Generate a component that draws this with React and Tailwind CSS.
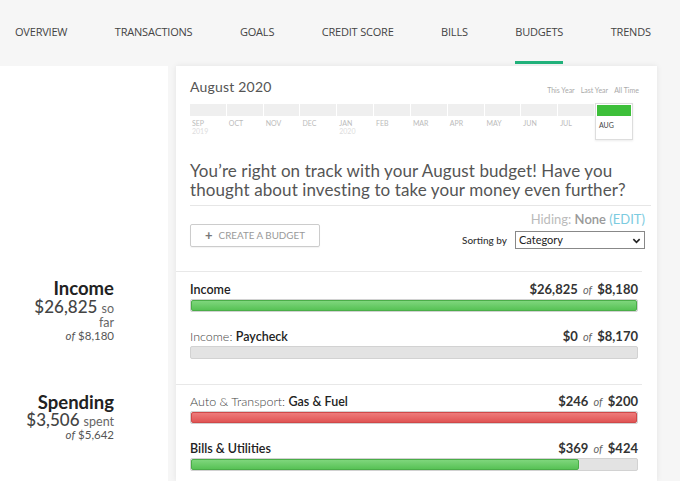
import React from 'react';

const navItems = ['OVERVIEW', 'TRANSACTIONS', 'GOALS', 'CREDIT SCORE', 'BILLS', 'BUDGETS', 'TRENDS'];

const months = [
  { m: 'SEP', y: '2019' },
  { m: 'OCT' },
  { m: 'NOV' },
  { m: 'DEC' },
  { m: 'JAN', y: '2020' },
  { m: 'FEB' },
  { m: 'MAR' },
  { m: 'APR' },
  { m: 'MAY' },
  { m: 'JUN' },
  { m: 'JUL' },
];

const Bar = ({ pct, color }) => {
  const fill =
    color === 'red'
      ? 'bg-gradient-to-b from-[#ee7b7b] to-[#e05454] border-[#d04848]'
      : 'bg-gradient-to-b from-[#7ed67c] to-[#57c255] border-[#4aad48]';
  return (
    <div className="mt-[2px] h-[13px] w-[448px] rounded-[2px] border border-[#d2d2d2] bg-[#e3e3e3] overflow-hidden flex">
      {pct > 0 && (
        <div className={`h-full rounded-[2px] border ${fill}`} style={{ width: `${pct}%` }} />
      )}
    </div>
  );
};

const BudgetRow = ({ prefix, name, spent, total, pct, color }) => (
  <div className="mb-[18px]">
    <div className="flex items-end justify-between w-[448px] h-[14px] text-[12.5px] leading-[14px] text-[#222]">
      <span>
        {prefix && <span className="font-light text-[#444]">{prefix}: </span>}
        <span className="font-semibold">{name}</span>
      </span>
      <span className="font-bold text-[13px] text-[#333]">
        {spent} <span className="italic font-normal text-[11px] text-[#666] px-[2px]">of</span> {total}
      </span>
    </div>
    <Bar pct={pct} color={color} />
  </div>
);

export default function App() {
  return (
    <div className="w-[680px] h-[481px] overflow-hidden bg-[#f6f6f6] font-['Lato',sans-serif]">
      {/* Top nav */}
      <div className="h-[66px] flex items-start pl-[15px] gap-[47.5px] font-['Open_Sans',sans-serif] text-[11px] text-[#444]">
        {navItems.map((item) => (
          <div key={item} className="flex flex-col items-stretch h-full">
            <span className="pt-[24px] leading-[15px] tracking-[-0.2px]">{item}</span>
            <div className="flex-1" />
            {item === 'BUDGETS' && <div className="h-[3px] mb-[2px] bg-[#22b37c]" />}
          </div>
        ))}
      </div>

      <div className="flex">
        {/* Left summary column */}
        <div className="w-[168px] h-[415px] bg-white pr-[54px] text-right text-[#333]">
          <div className="pt-[211px] text-[18.5px] leading-[22px] font-bold text-[#222]">Income</div>
          <div className="mt-[2px] leading-[12px] text-[#444]">
            <span className="text-[17px] font-medium">$26,825</span>{' '}
            <span className="text-[12.5px] text-[#666]">so<br />far</span>
          </div>
          <div className="text-[11.5px] leading-[13px] text-[#555]">
            <span className="italic">of</span> $8,180
          </div>

          <div className="mt-[49px] text-[18.5px] leading-[22px] font-bold text-[#222]">Spending</div>
          <div className="leading-[14px] text-[#444]">
            <span className="text-[17px] font-medium">$3,506</span>{' '}
            <span className="text-[12.5px] text-[#666]">spent</span>
          </div>
          <div className="text-[11.5px] leading-[12px] text-[#555]">
            <span className="italic">of</span> $5,642
          </div>
        </div>

        {/* Main card */}
        <div className="ml-[8px] w-[481px] h-[415px] bg-white shadow-[0_0_6px_rgba(0,0,0,0.08)] pl-[14px] pr-[12px]">
          <div className="flex justify-between items-end pt-[12px] pr-[6px]">
            <span className="text-[14px] leading-[18px] text-[#555] tracking-[0.2px]">August 2020</span>
            <span className="text-[7px] leading-[10px] text-[#aaa] space-x-[6px] mb-[1px]">
              <span>This Year</span>
              <span>Last Year</span>
              <span>All Time</span>
            </span>
          </div>

          {/* Month strip */}
          <div className="mt-[7px] flex w-[443px]">
            {months.map((mo) => (
              <div key={mo.m} className="w-[36.8px] mr-[1px] pt-[1px]">
                <div className="h-[12px] bg-[#efefef]" />
                <div className="pt-[3px] pl-[2px] text-[7px] leading-[8px] text-[#bbb]">
                  <div>{mo.m}</div>
                  {mo.y && <div className="text-[#ddd]">{mo.y}</div>}
                </div>
              </div>
            ))}
            <div className="w-[39px] h-[37px] border border-[#ddd] shadow-[0_1px_2px_rgba(0,0,0,0.08)] bg-white">
              <div className="h-[11px] bg-[#3dbf3a] mx-[1px] mt-[1px]" />
              <div className="pt-[5px] pl-[3px] text-[7px] leading-[8px] text-[#444]">AUG</div>
            </div>
          </div>

          <p className="mt-[21px] text-[17px] leading-[19px] text-[#555] tracking-[0.1px]">
            You’re right on track with your August budget! Have you thought about investing to take your money even further?
          </p>
          <div className="mt-[6px] h-px bg-[#e6e6e6] -mr-[6px]" />

          <div className="mt-[6px] text-right text-[13px] leading-[14px] text-[#bbb]">
            Hiding: <span className="font-semibold text-[#999]">None</span>{' '}
            <span className="text-[#7ccbe0]">(EDIT)</span>
          </div>
          <div className="flex items-end justify-between mt-[-2px]">
            <button className="w-[130px] h-[23px] border border-[#ccc] rounded-[2px] flex items-center justify-center gap-[6px] text-[9.8px] text-[#999] shadow-[0_1px_1px_rgba(0,0,0,0.05)]">
              <span className="text-[13px] leading-none text-[#777] font-bold">+</span>
              <span>CREATE A BUDGET</span>
            </button>
            <div className="flex items-center mb-[-2px]">
              <span className="text-[10px] text-[#333] mr-[8px] font-medium">Sorting by</span>
              <div className="w-[130px] h-[18px] border border-[#888] flex items-center justify-between px-[3px] text-[11px] text-[#222]">
                <span>Category</span>
                <svg width="9" height="9" viewBox="0 0 10 10">
                  <path d="M1.5 3.5 L5 7 L8.5 3.5" fill="none" stroke="#222" strokeWidth="1.8" />
                </svg>
              </div>
            </div>
          </div>

          <div className="mt-[24px] h-px bg-[#e8e8e8] -ml-[14px] mr-[3px]" />
          <div className="pt-[11px]">
            <BudgetRow name="Income" spent="$26,825" total="$8,180" pct={100} />
            <BudgetRow prefix="Income" name="Paycheck" spent="$0" total="$8,170" pct={0} />
          </div>

          <div className="mt-[25px] h-px bg-[#e8e8e8] -ml-[14px] mr-[3px]" />
          <div className="pt-[10px]">
            <BudgetRow prefix="Auto & Transport" name="Gas & Fuel" spent="$246" total="$200" pct={100} color="red" />
            <BudgetRow name="Bills & Utilities" spent="$369" total="$424" pct={87} />
          </div>
        </div>
      </div>
    </div>
  );
}
